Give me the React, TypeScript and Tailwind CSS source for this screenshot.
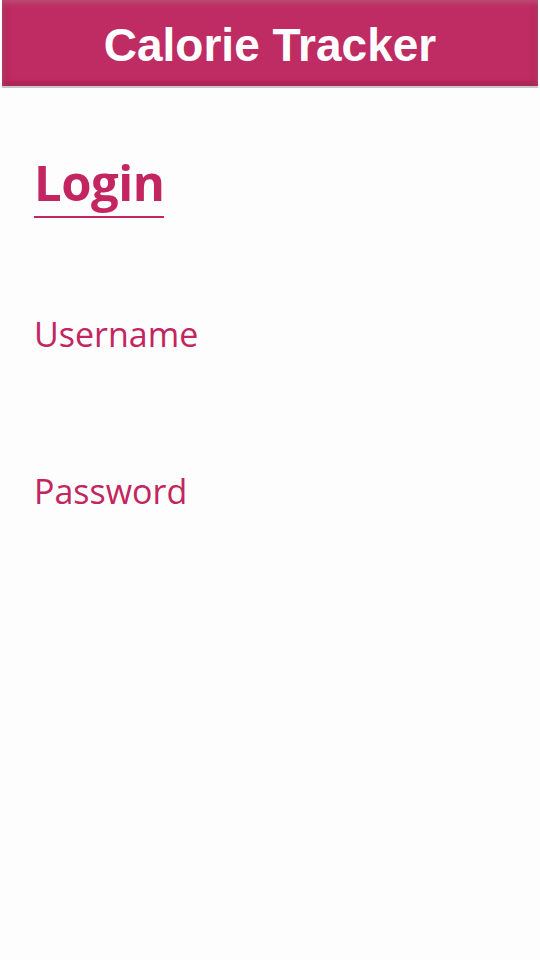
export default function App() {
  return (
    <div className="min-h-[960px] w-[540px] bg-[#fdfdfd]" style={{ fontFamily: '"Open Sans", sans-serif' }}>
      <header className="px-[2px]">
        <div className="relative flex h-[88px] items-center justify-center border-b-2 border-[#c9c4c7] bg-[#bf2c63] pt-[4px] shadow-[inset_0_2px_6px_rgba(255,255,255,0.25),inset_0_-3px_6px_rgba(120,0,40,0.25),inset_4px_0_6px_rgba(120,0,40,0.2),inset_-4px_0_6px_rgba(120,0,40,0.2)]">
          <h1
            className="text-[46px] font-bold leading-none text-white"
            style={{ fontFamily: '"Liberation Sans", Arial, sans-serif' }}
          >
            Calorie Tracker
          </h1>
        </div>
      </header>

      <main className="px-[34px] pt-[60px]">
        <h2 className="inline-block border-b-2 border-[#c2255f] text-[49px] font-bold leading-[68px] tracking-[-0.5px] text-[#c2255f]">
          Login
        </h2>

        <div className="mt-[91px] flex flex-col gap-[107px]">
          <label className="block text-[34px] leading-[50px] text-[#c2255f]">Username</label>
          <label className="block text-[34px] leading-[50px] text-[#c2255f]">Password</label>
        </div>
      </main>
    </div>
  );
}
